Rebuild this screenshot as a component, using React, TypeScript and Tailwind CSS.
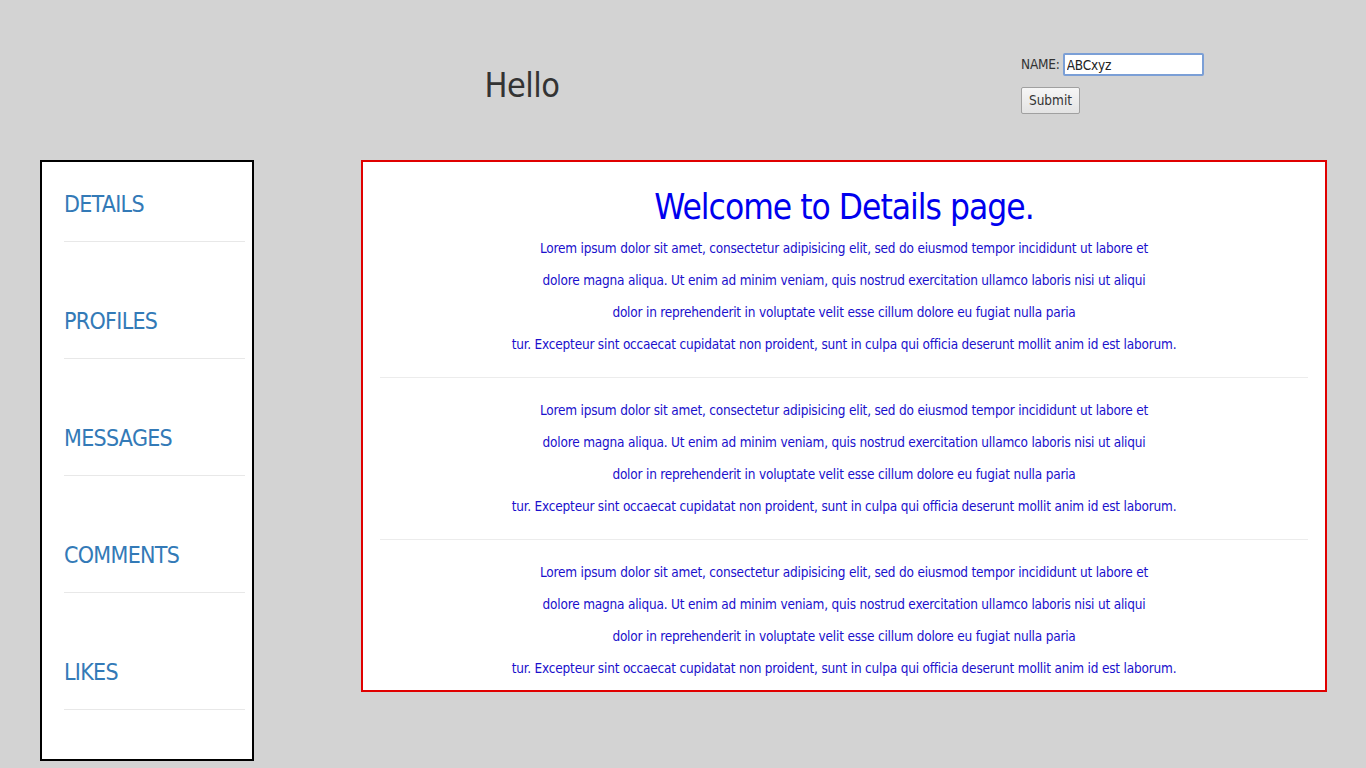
import React from "react";

const FONT = '"Liberation Sans Narrow", "DejaVu Sans Condensed", "Roboto Condensed", "Liberation Sans", sans-serif';

const menu = ["DETAILS", "PROFILES", "MESSAGES", "COMMENTS", "LIKES"];

const lines = [
  "Lorem ipsum dolor sit amet, consectetur adipisicing elit, sed do eiusmod tempor incididunt ut labore et",
  "dolore magna aliqua. Ut enim ad minim veniam, quis nostrud exercitation ullamco laboris nisi ut aliqui",
  "dolor in reprehenderit in voluptate velit esse cillum dolore eu fugiat nulla paria",
  "tur. Excepteur sint occaecat cupidatat non proident, sunt in culpa qui officia deserunt mollit anim id est laborum.",
];

const Block = () => (
  <div className="flex flex-col items-center">
    {lines.map((l) => (
      <p key={l} className="h-[32px] leading-[32px] text-[13.5px] tracking-[-0.2px] text-[#1a10cc]">
        {l}
      </p>
    ))}
  </div>
);

export default function App() {
  return (
    <div className="min-h-screen bg-[#d3d3d3]" style={{ fontFamily: FONT }}>
      {/* header */}
      <header className="flex h-[160px]">
        <div className="ml-[361px] w-[322px] pt-[63px] text-center">
          <h1 className="text-[34px] leading-[44px] tracking-[-0.5px] text-[#333]">Hello</h1>
        </div>
        <form className="ml-[338px] pt-[53px]" onSubmit={(e) => e.preventDefault()}>
          <div className="flex items-center gap-[3px] text-[13.5px] tracking-[-0.2px] text-[#333]">
            <label>NAME:</label>
            <input
              defaultValue="ABCxyz"
              className="w-[141px] h-[23px] border-2 border-[#7b9fd6] rounded-[2px] bg-white px-[2px] text-[13.5px] text-[#222] outline-none"
            />
          </div>
          <button className="mt-[11px] w-[59px] h-[27px] border border-[#a0a0a0] rounded-[2px] bg-gradient-to-b from-[#f6f6f6] to-[#e3e3e3] text-[13.5px] text-[#333]">
            Submit
          </button>
        </form>
      </header>

      <div className="flex items-start">
        {/* sidebar */}
        <nav className="ml-[40px] w-[214px] h-[601px] border-2 border-black bg-white">
          <ul className="flex flex-col gap-[37px]">
            {menu.map((m) => (
              <li key={m} className="ml-[22px] mr-[7px] h-[80px] border-b border-[#e8e8e8] pt-[27px]">
                <a href="#" className="text-[23px] leading-[30px] tracking-[-0.7px] text-[#337ab7]">
                  {m}
                </a>
              </li>
            ))}
          </ul>
        </nav>

        {/* main */}
        <main className="ml-[107px] w-[966px] h-[532px] border-2 border-[#e00000] bg-white px-[17px] pt-[22px]">
          <h2 className="text-center text-[35px] leading-[46px] tracking-[-1px] text-[#0000ee] mb-[2px]">
            Welcome to Details page.
          </h2>
          <Block />
          <hr className="mt-[17px] mb-[16px] border-[#ececec]" />
          <Block />
          <hr className="mt-[17px] mb-[16px] border-[#ececec]" />
          <Block />
        </main>
      </div>
    </div>
  );
}
